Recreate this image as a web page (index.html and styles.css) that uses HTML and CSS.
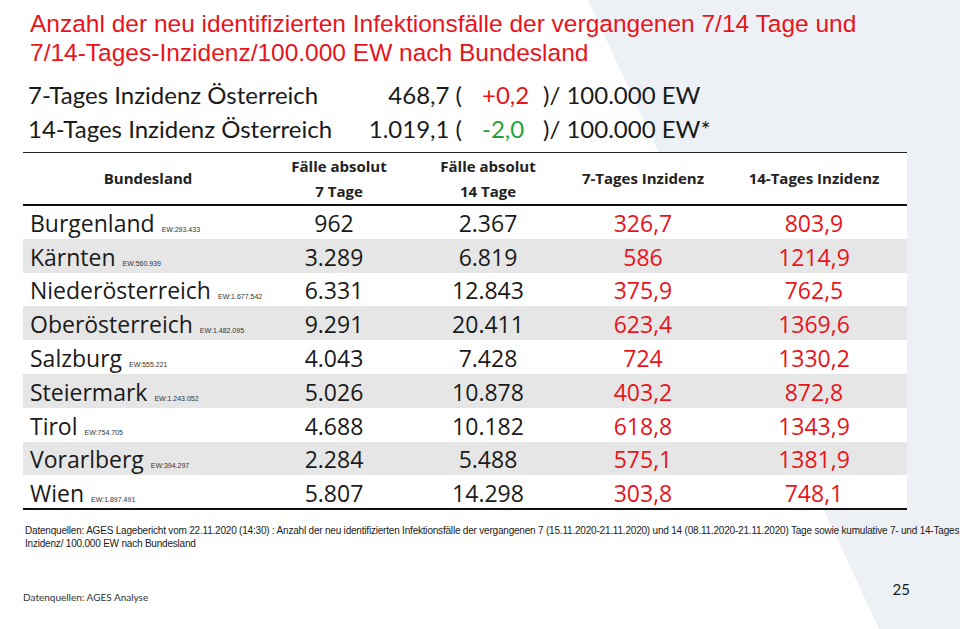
FILE: index.html
```
<!DOCTYPE html>
<html lang="de">
<head>
<meta charset="utf-8">
<title>Inzidenz nach Bundesland</title>
<link rel="stylesheet" href="styles.css">
</head>
<body>
<div class="slide">
  <h1 class="title">Anzahl der neu identifizierten Infektionsfälle der vergangenen 7/14 Tage und<br>7/14-Tages-Inzidenz/100.000 EW nach Bundesland</h1>

  <div class="inc">
    <div class="inc-row">
      <span class="inc-label">7-Tages Inzidenz Österreich</span>
      <span class="inc-val">468,7 (</span>
      <span class="inc-chg up">+0,2</span>
      <span class="inc-suf">)/ 100.000 EW</span>
    </div>
    <div class="inc-row">
      <span class="inc-label">14-Tages Inzidenz Österreich</span>
      <span class="inc-val">1.019,1 (</span>
      <span class="inc-chg down">-2,0</span>
      <span class="inc-suf">)/ 100.000 EW*</span>
    </div>
  </div>

  <table class="tbl">
    <colgroup>
      <col class="c1"><col class="c2"><col class="c3"><col class="c4"><col class="c5">
    </colgroup>
    <thead>
      <tr>
        <th>Bundesland</th>
        <th class="shift">Fälle absolut<br>7 Tage</th>
        <th>Fälle absolut<br>14 Tage</th>
        <th>7-Tages Inzidenz</th>
        <th class="last">14-Tages Inzidenz</th>
      </tr>
    </thead>
    <tbody>
      <tr><td class="name">Burgenland <small>EW:293.433</small></td><td>962</td><td>2.367</td><td class="red">326,7</td><td class="red last">803,9</td></tr>
      <tr class="alt"><td class="name">Kärnten <small>EW:560.939</small></td><td>3.289</td><td>6.819</td><td class="red">586</td><td class="red last">1214,9</td></tr>
      <tr><td class="name">Niederösterreich <small>EW:1.677.542</small></td><td>6.331</td><td>12.843</td><td class="red">375,9</td><td class="red last">762,5</td></tr>
      <tr class="alt"><td class="name">Oberösterreich <small>EW:1.482.095</small></td><td>9.291</td><td>20.411</td><td class="red">623,4</td><td class="red last">1369,6</td></tr>
      <tr><td class="name">Salzburg <small>EW:555.221</small></td><td>4.043</td><td>7.428</td><td class="red">724</td><td class="red last">1330,2</td></tr>
      <tr class="alt"><td class="name">Steiermark <small>EW:1.243.052</small></td><td>5.026</td><td>10.878</td><td class="red">403,2</td><td class="red last">872,8</td></tr>
      <tr><td class="name">Tirol <small>EW:754.705</small></td><td>4.688</td><td>10.182</td><td class="red">618,8</td><td class="red last">1343,9</td></tr>
      <tr class="alt"><td class="name">Vorarlberg <small>EW:394.297</small></td><td>2.284</td><td>5.488</td><td class="red">575,1</td><td class="red last">1381,9</td></tr>
      <tr><td class="name">Wien <small>EW:1.897.491</small></td><td>5.807</td><td>14.298</td><td class="red">303,8</td><td class="red last">748,1</td></tr>
    </tbody>
  </table>

  <p class="note">Datenquellen: AGES Lagebericht vom 22.11.2020 (14:30) : Anzahl der neu identifizierten Infektionsfälle der vergangenen 7 (15.11.2020-21.11.2020) und 14 (08.11.2020-21.11.2020) Tage sowie kumulative 7- und 14-Tages<br>Inzidenz/ 100.000 EW nach Bundesland</p>

  <div class="foot">
    <span class="source">Datenquellen: AGES Analyse</span>
    <span class="page">25</span>
  </div>
</div>
</body>
</html>
```

FILE: styles.css
```
html, body {
  margin: 0;
  padding: 0;
}

body {
  background: #fff;
}

.slide {
  position: relative;
  z-index: 0;
  width: 960px;
  height: 629px;
  overflow: hidden;
  background: #fff;
  font-family: Lato, "Open Sans", sans-serif;
  color: #1a1a1a;
}

.slide::before {
  content: "";
  position: absolute;
  inset: 0;
  z-index: -1;
  background: #edf1f5;
  clip-path: polygon(588px 0, 100% 0, 100% 100%, 879px 100%);
}

.title {
  margin: 0;
  padding: 9px 0 0 30px;
  font-family: "Liberation Sans", Arial, sans-serif;
  font-weight: normal;
  font-size: 24.5px;
  line-height: 29px;
  color: #e8141c;
  white-space: nowrap;
}

.inc {
  margin-top: 11px;
  padding-left: 28px;
  font-size: 24px;
  line-height: 34px;
  color: #1a1a1a;
}

.inc-row {
  display: grid;
  grid-template-columns: 340px 94px 81px auto;
  white-space: nowrap;
}

.inc-val {
  text-align: right;
}

.inc-chg {
  padding-left: 20px;
}

.up {
  color: #e8141c;
}

.down {
  color: #1fa33a;
}

.tbl {
  margin: 6px 0 0 23px;
  width: 884px;
  border-collapse: collapse;
  table-layout: fixed;
  background: #fff;
  font-family: "Open Sans", Lato, sans-serif;
}

.c1 { width: 250px; }
.c2 { width: 122px; }
.c3 { width: 186px; }
.c4 { width: 124px; }
.c5 { width: 202px; }

.tbl thead tr {
  border-top: 1.5px solid #222;
  border-bottom: 2.5px solid #111;
}

.tbl th {
  height: 51px;
  padding: 0;
  font-size: 15px;
  font-weight: bold;
  line-height: 25px;
  color: #222;
  text-align: center;
  vertical-align: middle;
  white-space: nowrap;
}

.tbl th.shift {
  padding-left: 10px;
}

.tbl td {
  height: 33.8px;
  padding: 2px 0 0;
  box-sizing: border-box;
  font-size: 23px;
  line-height: 24px;
  text-align: center;
  vertical-align: middle;
  color: #1a1a1a;
}

.tbl .last {
  padding-left: 16px;
}

.tbl tbody tr:last-child {
  border-bottom: 2px solid #111;
}

.tbl .alt {
  background: #e6e6e6;
}

.tbl .name {
  text-align: left;
  padding-left: 7px;
  white-space: nowrap;
}

.tbl .name small {
  margin-left: 1px;
  font-family: "Liberation Sans", Arial, sans-serif;
  font-size: 7px;
  line-height: 1;
  color: #333;
}

.tbl .red {
  color: #e8141c;
}

.note {
  margin: 14px 0 0 25px;
  font-family: "Liberation Sans", Arial, sans-serif;
  font-size: 10px;
  line-height: 13px;
  letter-spacing: -0.2px;
  color: #1a1a1a;
  white-space: nowrap;
}

.foot {
  display: flex;
  justify-content: space-between;
  align-items: flex-start;
  padding: 30px 50px 0 23px;
}

.source {
  margin-top: 11px;
  font-size: 10px;
  color: #333;
}

.page {
  font-size: 15px;
  color: #1a1a1a;
}
```
